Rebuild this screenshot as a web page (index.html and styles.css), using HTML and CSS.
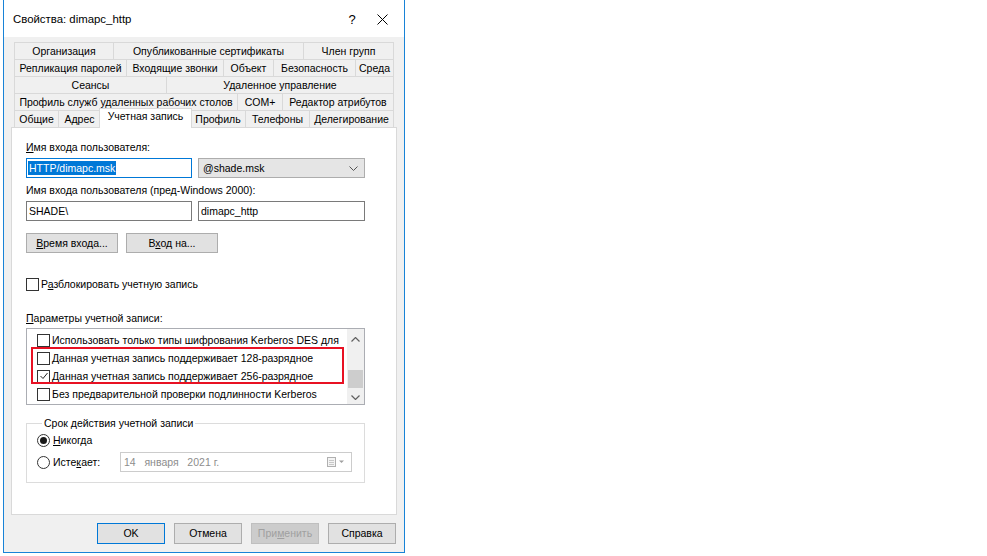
FILE: index.html
```html
<!DOCTYPE html>
<html lang="ru">
<head>
<meta charset="utf-8">
<title>Свойства: dimapc_http</title>
<link rel="stylesheet" href="styles.css">
</head>
<body>
<div class="dialog">
  <div class="titlebar">
    <span class="title">Свойства: dimapc_http</span>
    <span class="help">?</span>
    <svg class="close" width="11" height="11" viewBox="0 0 11 11"><path d="M0.5 0.5L10.5 10.5M10.5 0.5L0.5 10.5" stroke="#000" stroke-width="1"/></svg>
  </div>
  <div class="body">
    <div class="tabs">
      <div class="tabrow r1"><div class="tab">Организация</div><div class="tab">Опубликованные сертификаты</div><div class="tab">Член групп</div></div>
      <div class="tabrow r2"><div class="tab">Репликация паролей</div><div class="tab">Входящие звонки</div><div class="tab">Объект</div><div class="tab">Безопасность</div><div class="tab">Среда</div></div>
      <div class="tabrow r3"><div class="tab">Сеансы</div><div class="tab">Удаленное управление</div></div>
      <div class="tabrow r4"><div class="tab">Профиль служб удаленных рабочих столов</div><div class="tab">COM+</div><div class="tab">Редактор атрибутов</div></div>
      <div class="tabrow r5"><div class="tab">Общие</div><div class="tab">Адрес</div><div class="tab selected">Учетная запись</div><div class="tab">Профиль</div><div class="tab">Телефоны</div><div class="tab">Делегирование</div></div>
    </div>
    <div class="panel">
      <div class="label l1"><u>И</u>мя входа пользователя:</div>
      <div class="fieldrow">
        <div class="input focus"><span class="sel">HTTP/dimapc.msk</span></div>
        <div class="combo"><span>@shade.msk</span><svg width="9" height="5" viewBox="0 0 9 5"><path d="M0.5 0.5L4.5 4.5L8.5 0.5" fill="none" stroke="#555" stroke-width="1"/></svg></div>
      </div>
      <div class="label l2">Имя входа пользователя (пред-Windows 2000):</div>
      <div class="fieldrow">
        <div class="input">SHADE\</div>
        <div class="input">dimapc_http</div>
      </div>
      <div class="btnrow">
        <div class="btn wide"><u>В</u>ремя входа...</div>
        <div class="btn wide">В<u>х</u>од на...</div>
      </div>
      <div class="check unlock"><span class="box"></span><span>Р<u>а</u>зблокировать учетную запись</span></div>
      <div class="label l3"><u>П</u>араметры учетной записи:</div>
      <div class="listbox">
        <div class="items">
          <div class="item"><span class="box"></span><span>Использовать только типы шифрования Kerberos DES для</span></div>
          <div class="item"><span class="box"></span><span>Данная учетная запись поддерживает 128-разрядное</span></div>
          <div class="item"><span class="box checked"><svg width="10" height="10" viewBox="0 0 10 10"><path d="M1.5 5L4 7.5L8.5 2" fill="none" stroke="#222" stroke-width="1"/></svg></span><span>Данная учетная запись поддерживает 256-разрядное</span></div>
          <div class="item"><span class="box"></span><span>Без предварительной проверки подлинности Kerberos</span></div>
        </div>
        <div class="scrollbar">
          <svg class="arrow" width="9" height="5" viewBox="0 0 9 5"><path d="M0.5 4.5L4.5 0.5L8.5 4.5" fill="none" stroke="#606060" stroke-width="1.2"/></svg>
          <div class="track"><div class="thumb"></div></div>
          <svg class="arrow" width="9" height="5" viewBox="0 0 9 5"><path d="M0.5 0.5L4.5 4.5L8.5 0.5" fill="none" stroke="#606060" stroke-width="1.2"/></svg>
        </div>
        <div class="highlight"></div>
      </div>
      <fieldset class="group">
        <legend>Срок действия учетной записи</legend>
        <div class="radio r-never"><span class="dot on"></span><span><u>Н</u>икогда</span></div>
        <div class="radio r-exp"><span class="dot"></span><span class="exptext">Исте<u>к</u>ает:</span>
          <div class="date"><span>14&nbsp;&nbsp;&nbsp;января&nbsp;&nbsp;&nbsp;2021 г.</span>
            <svg width="18" height="10" viewBox="0 0 18 10"><rect x="0.5" y="0.5" width="8" height="9" fill="#f4f4f4" stroke="#b0b0b0"/><path d="M2 3.5H7M2 5.5H7M2 7.5H7" stroke="#c8c8c8"/><path d="M12 3.5H17L14.5 6Z" fill="#a0a0a0"/></svg>
          </div>
        </div>
      </fieldset>
    </div>
    <div class="footer">
      <div class="btn default">OK</div>
      <div class="btn">Отмена</div>
      <div class="btn disabled">При<u>м</u>енить</div>
      <div class="btn">Справка</div>
    </div>
  </div>
</div>
</body>
</html>
```

FILE: styles.css
```css
* { box-sizing: border-box; }
html, body { margin: 0; padding: 0; background: #fff; }
body { font-family: "Liberation Sans", Arial, sans-serif; font-size: 10.5px; color: #000; }
u { text-decoration: underline; text-underline-offset: 1px; }

.dialog {
  margin-left: 3px;
  width: 402px;
  height: 553px;
  border: 1px solid #1883d7;
  border-top: none;
  background: #f0f0f0;
  display: flex;
  flex-direction: column;
}
.titlebar {
  height: 37px;
  background: #fff;
  display: flex;
  align-items: center;
  padding-left: 9px;
  padding-top: 1px;
}
.title { font-size: 11.4px; flex: 1; }
.help { font-size: 13px; width: 36px; margin-right: 7px; text-align: center; }
.close { margin-right: 16px; }

.body { flex: 1; padding: 5px 7px 0 7px; display: flex; flex-direction: column; }

.tabs { margin: 0 3px 0 3px; }
.tabrow {
  display: grid;
  height: 17px;
  padding: 1px 1px 0 1px;
  column-gap: 1px;
  background: #d9d9d9;
}
.r1 { grid-template-columns: 98px 189px 1fr; }
.r2 { grid-template-columns: 111px 96px 49px 81px 1fr; }
.r3 { grid-template-columns: 151px 1fr; }
.r4 { grid-template-columns: 222px 44px 1fr; }
.r5 { grid-template-columns: 43px 41px 89px 54px 63px 1fr; }
.tab {
  background: #f0f0f0;
  text-align: center;
  line-height: 16px;
  white-space: nowrap;
  overflow: hidden;
}
.tab.selected {
  position: relative;
  z-index: 2;
  background: #fff;
  margin: -3px -2px -1px -2px;
  border: 1px solid #d9d9d9;
  border-bottom: none;
  line-height: 15px;
  padding-bottom: 3px;
  overflow: visible;
}

.panel {
  height: 388px;
  background: #fff;
  border: 1px solid #d9d9d9;
  padding: 13px 31px 0 14px;
  display: flex;
  flex-direction: column;
}
.label { line-height: 13px; white-space: nowrap; }
.l1 { margin-bottom: 4px; }
.l2 { margin-top: 6px; margin-bottom: 4px; }
.l3 { margin-top: 21px; margin-bottom: 3px; }

.fieldrow { display: flex; gap: 6px; height: 20px; }
.input {
  width: 166px;
  height: 20px;
  border: 1px solid #7a7a7a;
  background: #fff;
  padding: 0 2px;
  line-height: 18px;
  white-space: nowrap;
}
.fieldrow .input + .input { width: 167px; }
.input.focus { border-color: #0078d7; padding-left: 1px; }
.sel { background: #0078d7; color: #fff; display: inline-block; line-height: 14px; padding: 0 1px; }
.combo {
  width: 167px;
  height: 20px;
  border: 1px solid #adadad;
  background: #e5e5e5;
  display: flex;
  align-items: center;
  justify-content: space-between;
  padding: 0 6px 0 4px;
}

.btnrow { display: flex; gap: 8px; margin-top: 12px; }
.btn {
  height: 20px;
  border: 1px solid #adadad;
  background: #e1e1e1;
  text-align: center;
  line-height: 18px;
  white-space: nowrap;
}
.btn.wide { width: 92px; }

.check { display: flex; align-items: center; gap: 2px; line-height: 13px; }
.unlock { margin-top: 25px; }
.box {
  width: 13px;
  height: 13px;
  border: 1px solid #333;
  background: #fff;
  display: inline-flex;
  align-items: center;
  justify-content: center;
  flex: none;
}

.listbox {
  position: relative;
  height: 77px;
  border: 1px solid #abadb3;
  background: #fff;
  display: flex;
}
.items { flex: 1; padding: 2px 0 0 10px; min-width: 0; }
.item { display: flex; align-items: center; gap: 2px; height: 18px; white-space: nowrap; overflow: hidden; }
.scrollbar {
  width: 17px;
  background: #f0f0f0;
  display: flex;
  flex-direction: column;
  align-items: center;
  padding: 8px 0 4px;
}
.arrow { flex: none; }
.track { flex: 1; width: 100%; display: flex; flex-direction: column; justify-content: flex-end; padding: 0 1px 7px; }
.thumb { height: 18px; background: #cdcdcd; }
.highlight {
  position: absolute;
  left: 4px;
  top: 18px;
  width: 313px;
  height: 37px;
  border: 2px solid #e81123;
}

.group {
  margin: 12px 0 0 0;
  padding: 4px 12px 10px 10px;
  border: 1px solid #dcdcdc;
  height: 66px;
}
.group legend { padding: 0 2px; margin-left: 5px; line-height: 13px; }
.radio { display: flex; align-items: center; gap: 3px; line-height: 13px; }
.r-exp { margin-top: 5px; }
.dot {
  width: 13px;
  height: 13px;
  border: 1px solid #333;
  border-radius: 50%;
  background: #fff;
  flex: none;
  display: inline-flex;
  align-items: center;
  justify-content: center;
}
.dot.on::after { content: ""; width: 7px; height: 7px; border-radius: 50%; background: #1a1a1a; }
.exptext { width: 64px; }
.date {
  flex: 1;
  height: 20px;
  border: 1px solid #cccccc;
  background: #fff;
  color: #8d8d8d;
  display: flex;
  align-items: center;
  justify-content: space-between;
  padding: 0 6px 0 3px;
  white-space: nowrap;
}

.footer {
  display: flex;
  justify-content: flex-end;
  gap: 9px;
  padding-top: 8px;
  padding-right: 1px;
}
.footer .btn { width: 68px; height: 21px; line-height: 19px; }
.btn.default { border-color: #0078d7; }
.btn.disabled { color: #a0a0a0; border-color: #bfbfbf; background: #cccccc; }
```
